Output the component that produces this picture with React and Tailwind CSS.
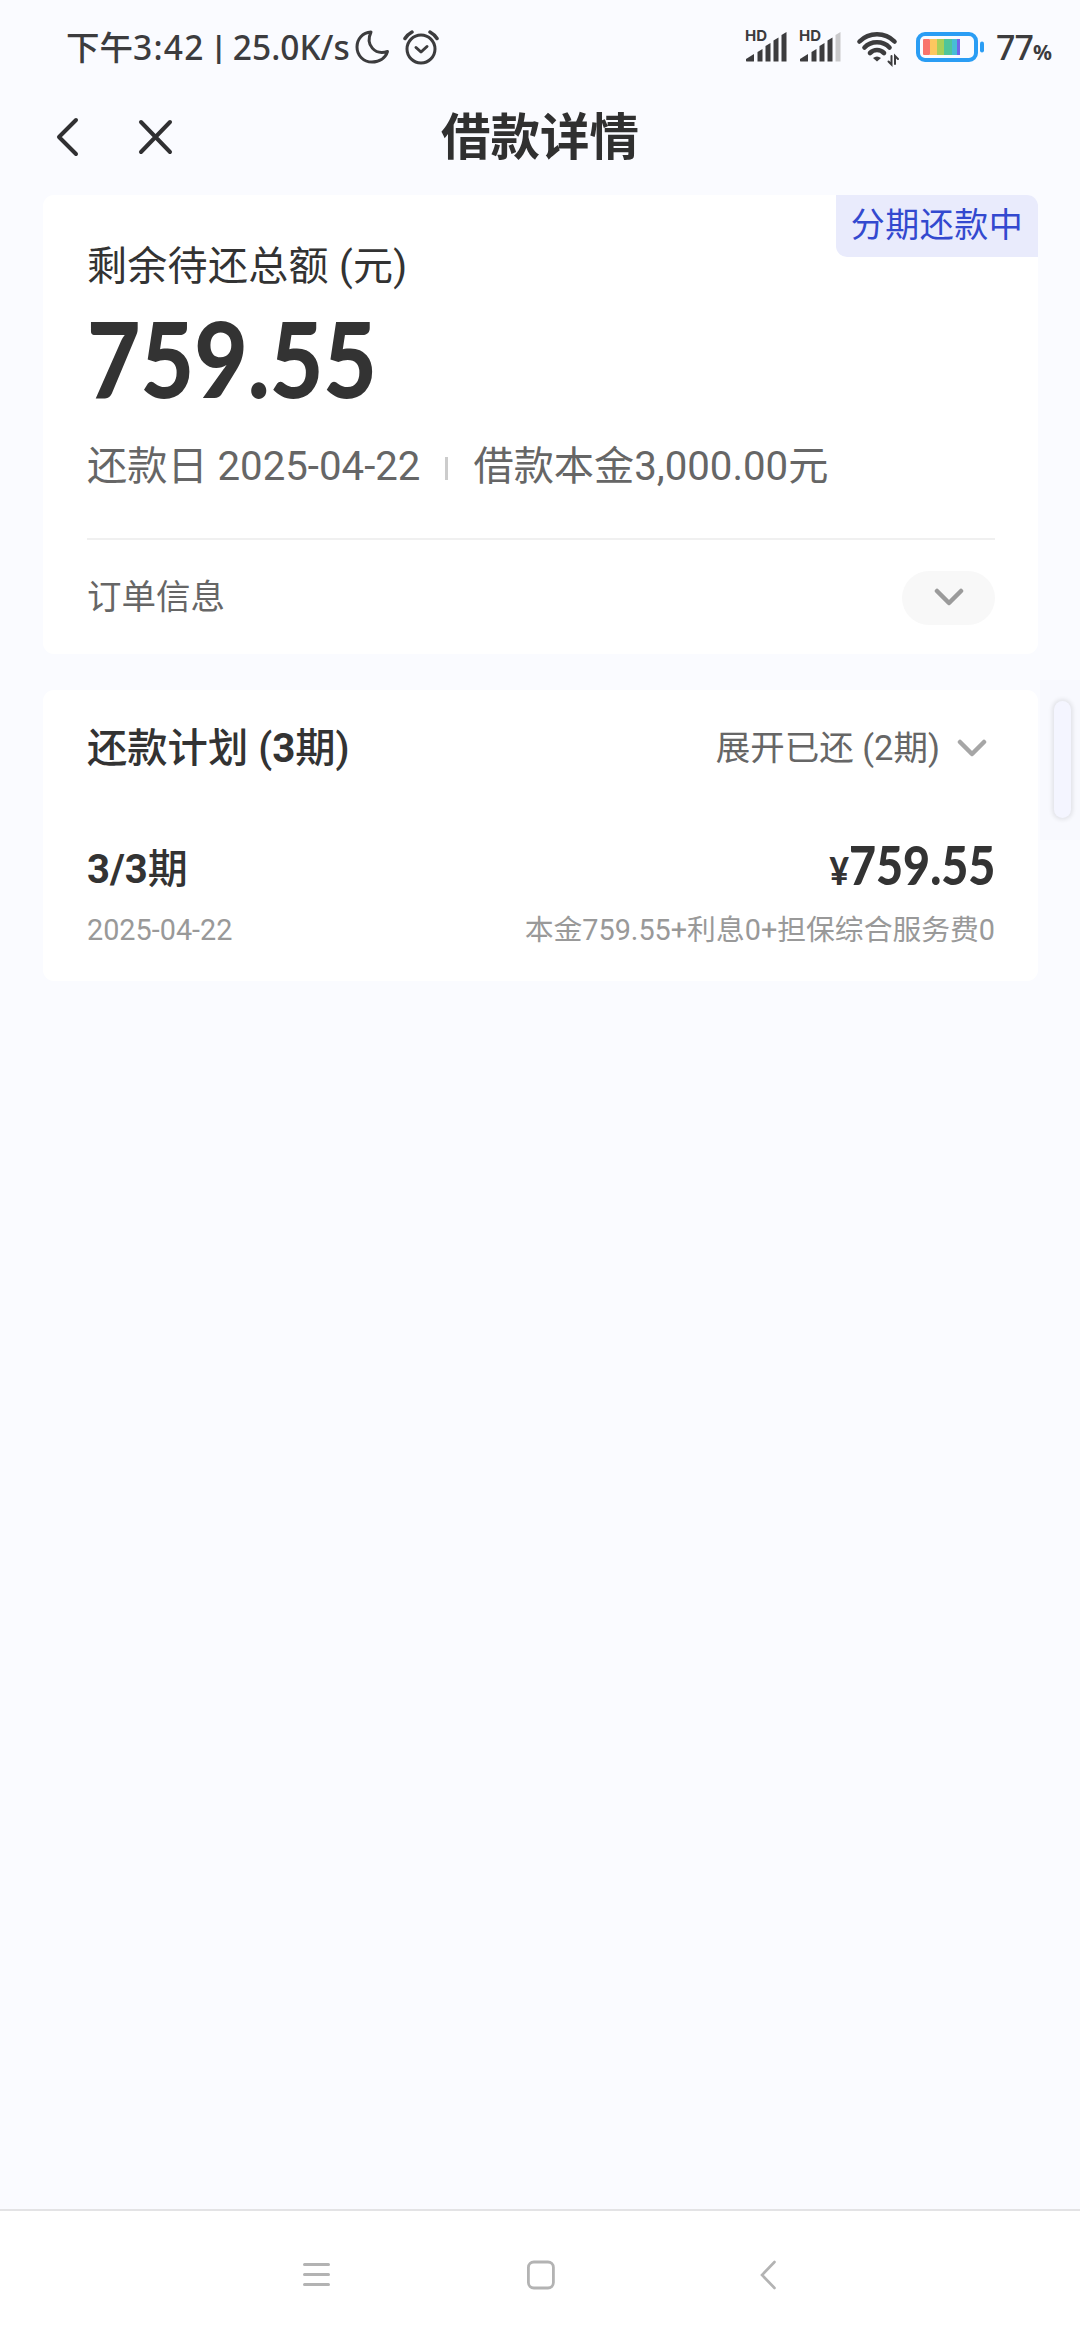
import { useState } from "react";

const INK = "#3c3c3e";

const Chevron = ({ className, color = "#9b9b9b" }) => (
  <svg className={className} width="30" height="20" viewBox="0 0 30 20" fill="none">
    <path d="M3 3L15 15L27 3" stroke={color} strokeWidth="4.5" strokeLinecap="round" strokeLinejoin="round" />
  </svg>
);

// Signal bars, the last bar is faded when the reception is not full
const Signal = ({ weak }) => (
  <div className="relative h-[31px] w-[42px]">
    <span className="absolute -top-[3px] left-0 font-['Inter'] text-[15px] leading-[16px] font-bold">HD</span>
    <svg className="absolute top-0 left-0" width="42" height="31" viewBox="0 0 42 31" fill={INK}>
      <path d="M1 30V28L9 23V30Q9 30.500 8.500 30.500H1.500Z" />
      <path d="M12.500 21L17.500 18V30.500H12.500Z" />
      <path d="M20.500 15L25.500 12V30.500H20.500Z" />
      <path d="M28.500 9.500L33.500 6.500V30.500H28.500Z" />
      <path d="M36.500 4L41.500 1V30.500H36.500Z" fill={weak ? "#c9c9cb" : INK} />
    </svg>
  </div>
);

const StatusBar = () => (
  <div className="flex h-[96px] items-start text-[#3c3c3e]">
    <div className="flex h-[94px] w-[290px] items-center pl-[66px] font-['Noto_Sans','Noto_Sans_CJK_SC',sans-serif] text-[33.500px] font-medium whitespace-nowrap">
      <span>
        下午<span className="tracking-[1.300px]">3:42</span>
      </span>
      <span className="flex w-[28px] shrink-0 justify-center pb-[2px] text-[29px] font-bold">|</span>
      <span>25.0K/s</span>
    </div>
    <svg className="mt-[29px] ml-[64px]" width="36" height="36" viewBox="0 0 36 36" fill="none" stroke={INK} strokeWidth="3" strokeLinejoin="round">
      <path d="M17 3C8.500 3.500 3 10 3 18C3 26.500 9.500 33 18 33C25.500 33 31.500 29 33.500 22.500C21 26.500 11 16 17 3Z" />
    </svg>
    <svg className="mt-[29px] ml-[13px]" width="36" height="36" viewBox="0 0 36 36" fill="none" stroke={INK} strokeWidth="3" strokeLinecap="round" strokeLinejoin="round">
      <circle cx="18" cy="20" r="14" />
      <path d="M13 18.500L18 23L24 17.500" />
      <path d="M2 9.500Q4.500 5.500 9 3M27 3Q31.500 5.500 34 9.500" strokeWidth="3.500" />
    </svg>
    <div className="ml-auto flex items-start pt-[31px] pr-[28px]">
      <Signal />
      <div className="w-[12px]" />
      <Signal weak />
      <svg className="ml-[15px]" width="44" height="36" viewBox="0 0 44 36" fill="none" stroke={INK} strokeWidth="4.600" strokeLinecap="round">
        <path d="M3.500 10.500C13 0.800 29 0.800 38.500 10.500" />
        <path d="M8.500 16.500C15 9.500 27 9.500 33.500 16.500" />
        <path d="M14 22C18 18 24 18 28 22" />
        <path d="M17 27Q21 24 25 27L21 30.500Z" fill={INK} stroke="none" />
        <path d="M35.500 25V33.500L32.500 30.500M39 33V25L42 28" strokeWidth="2" />
      </svg>
      <svg className="ml-[16px]" width="70" height="31" viewBox="0 0 70 31" fill="none">
        <rect x="2" y="3" width="58" height="26" rx="7" stroke="#2a9df4" strokeWidth="4" />
        <path d="M66 12.500V19.500" stroke="#2a9df4" strokeWidth="4" strokeLinecap="round" />
        <rect x="7" y="8" width="7" height="16" rx="1" fill="#f9746c" />
        <rect x="14" y="8" width="7" height="16" fill="#fcc75f" />
        <rect x="21" y="8" width="7" height="16" fill="#a6cf5a" />
        <rect x="28" y="8" width="8" height="16" fill="#4fc59a" />
        <rect x="36" y="8" width="5" height="16" fill="#48bdd6" />
        <rect x="41" y="8" width="3" height="16" fill="#7166e8" />
      </svg>
      <span className="ml-[10px] flex w-[56px] items-baseline font-['Noto_Sans'] text-[34px] leading-[32px] font-medium tracking-[-1px]">
        77<span className="text-[21px] font-bold">%</span>
      </span>
    </div>
  </div>
);

const NavBar = () => (
  <div className="grid h-[82px] grid-cols-[1fr_auto_1fr] items-center">
    <div className="flex items-center gap-[58px] pl-[54px]">
      <svg width="26" height="42" viewBox="0 0 26 42" fill="none" stroke="#303032" strokeWidth="4" strokeLinecap="round" strokeLinejoin="round">
        <path d="M22 4L5 21L22 38" />
      </svg>
      <svg width="36" height="36" viewBox="0 0 36 36" fill="none" stroke="#303032" strokeWidth="4" strokeLinecap="round">
        <path d="M3 3L32 33M32 3L3 33" />
      </svg>
    </div>
    <h1 className="pt-[4px] text-[49.500px] leading-none font-bold text-[#303030]">借款详情</h1>
  </div>
);

const LoanCard = ({ open, onToggle }) => (
  <section className="relative mr-[42px] ml-[43px] mt-[17px] h-[459px] rounded-[11px] bg-white pr-[43px] pl-[44px]">
    <div className="absolute top-0 right-0 flex h-[62px] w-[202px] items-center justify-center rounded-tr-[11px] rounded-bl-[11px] bg-[#e9ebfc] pb-px text-[34px] tracking-[0.5px] text-[#3349cf]">
      分期还款中
    </div>
    <p className="pt-[43px] text-[40px] leading-[58px] tracking-[0.300px] text-[#333]">剩余待还总额 (元)</p>
    <p className="mt-[9px] h-[104px] origin-left scale-x-[0.880] font-['Lato'] text-[105px] leading-[104px] font-black text-[#333]">759.55</p>
    <div className="mt-[29px] flex h-[58px] items-center text-[40.200px] text-[#666]">
      <span>还款日 2025-04-22</span>
      <span className="mx-[25px] mt-[3px] h-[23px] w-[3px] bg-[#ccc]" />
      <span>借款本金3,000.00元</span>
    </div>
    <div className="mt-[42px] flex h-[118px] items-center justify-between border-t-2 border-[#f0f0f0]">
      <span className="pb-px text-[34.500px] text-[#666]">订单信息</span>
      <button onClick={onToggle} aria-expanded={open} className="flex h-[54px] w-[93px] items-center justify-center rounded-full bg-[#f8f8f8]">
        <Chevron />
      </button>
    </div>
  </section>
);

const PlanCard = () => (
  <section className="mr-[42px] ml-[43px] mt-[36px] h-[291px] rounded-[11px] bg-white pr-[43px] pl-[44px] pt-[30px]">
    <div className="flex h-[58px] items-center justify-between">
      <h2 className="text-[40.300px] font-medium text-[#333]">
        还款计划 (<span className="font-bold">3</span>期)
      </h2>
      <span className="flex items-center pr-[8px] text-[34.500px] text-[#666]">
        展开已还 (2期)
        <Chevron className="ml-[17px]" color="#a6a6a6" />
      </span>
    </div>
    <div className="mt-[63px] flex h-[58px] items-center justify-between text-[#333]">
      <span className="text-[40px] font-medium">
        <span className="font-bold">3/3</span>期
      </span>
      <span className="flex origin-right scale-x-[0.880] items-baseline pb-[6px] font-['Lato'] font-black">
        <span className="text-[38px]">¥</span>
        <span className="text-[53px] leading-[58px]">759.55</span>
      </span>
    </div>
    <div className="mt-[10px] flex items-center justify-between text-[28.800px] leading-[42px] text-[#999]">
      <span>2025-04-22</span>
      <span>本金759.55+利息0+担保综合服务费0</span>
    </div>
  </section>
);

// Android three-button navigation
const SystemBar = () => (
  <div className="flex h-[131px] items-center border-t-2 border-[#e3e3e5] bg-white pb-[2px] pl-[302px]">
    <svg width="30" height="30" viewBox="0 0 30 30" fill="none" stroke="#b3b3b3" strokeWidth="3" strokeLinecap="round">
      <path d="M2.500 4.500H26.500M2.500 14.500H26.500M2.500 24.500H26.500" />
    </svg>
    <svg className="ml-[194px]" width="30" height="30" viewBox="0 0 30 30" fill="none" stroke="#b3b3b3" strokeWidth="2.800">
      <rect x="2.400" y="2" width="25" height="26" rx="5.500" />
    </svg>
    <svg className="ml-[203px]" width="18" height="30" viewBox="0 0 18 30" fill="none" stroke="#b3b3b3" strokeWidth="2.600" strokeLinecap="round">
      <path d="M15.500 2L3 15L15.500 28" />
    </svg>
  </div>
);

const App = () => {
  const [open, setOpen] = useState(false);

  return (
    <div className="relative flex h-[2340px] w-[1080px] flex-col overflow-hidden bg-[#fafbff] font-['Roboto','Noto_Sans_CJK_SC',sans-serif]">
      <StatusBar />
      <NavBar />
      <LoanCard open={open} onToggle={() => setOpen(!open)} />
      <PlanCard />
      <div className="flex-1" />
      <SystemBar />
      {/* Sidebar handle floating over the page edge */}
      <div className="absolute top-[680px] right-0 flex h-[160px] w-[40px] items-start bg-[#f8f9fe] pt-[21px] pl-[14px]">
        <div className="h-[117px] w-[17px] rounded-full bg-[#f4f5ff] shadow-[0_0_4px_2px_rgba(0,0,0,0.09)]" />
      </div>
    </div>
  );
};

export default App;
